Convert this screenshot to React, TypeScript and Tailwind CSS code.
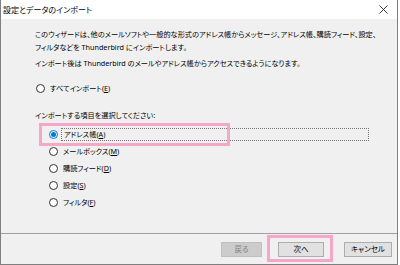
import React from 'react';

const jp = "font-['Noto_Sans','Noto_Sans_CJK_JP',sans-serif] [font-feature-settings:'palt']";

const Radio = ({ checked = false }: { checked?: boolean }) => (
  <span
    className={`inline-flex h-[9px] w-[9px] shrink-0 items-center justify-center rounded-full border bg-white ${
      checked ? 'border-[#0078d7]' : 'border-[#333333]'
    }`}
  >
    {checked && <span className="h-[5px] w-[5px] rounded-full bg-[#0078d7]" />}
  </span>
);

const Key = ({ k }: { k: string }) => (
  <>
    (<span className="underline underline-offset-1">{k}</span>)
  </>
);

const items = [
  { label: 'アドレス帳', key: 'A', checked: true },
  { label: 'メールボックス', key: 'M' },
  { label: '購読フィード', key: 'D' },
  { label: '設定', key: 'S' },
  { label: 'フィルタ', key: 'F' },
];

export default function App() {
  return (
    <div className={`relative h-[265px] w-[400px] overflow-hidden bg-white text-black ${jp}`}>
      <div className="flex h-[265px] w-[398px] flex-col border-x border-b border-[#7f7f7f]">
        {/* Title bar */}
        <div className="flex h-[19px] items-center justify-between bg-white pl-[2px] pr-[8px] text-[8px]">
          <span>設定とデータのインポート</span>
          <svg width="9" height="9" viewBox="0 0 9 9" className="mr-[1px]">
            <path d="M0.5 0.5 L8.5 8.5 M8.5 0.5 L0.5 8.5" stroke="#222" strokeWidth="0.9" />
          </svg>
        </div>

        {/* Body */}
        <div className="flex flex-1 flex-col whitespace-nowrap bg-[#f0f0f0] pl-[34px] pt-[9px] text-[7.2px] leading-[13px]">
          <p>このウィザードは、他のメールソフトや一般的な形式のアドレス帳からメッセージ、アドレス帳、購読フィード、設定、</p>
          <p>フィルタなどを Thunderbird にインポートします。</p>
          <p className="mt-[3px]">インポート後は Thunderbird のメールやアドレス帳からアクセスできるようになります。</p>

          <div className="mt-[12px] flex h-[13px] items-center gap-[5px] pl-[1px]">
            <Radio />
            <span>
              すべてインポート<Key k="E" />
            </span>
          </div>

          <p className="mt-[14px]">インポートする項目を選択してください:</p>

          <div className="mt-[6px] flex flex-col gap-[4px] pl-[14px]">
            {items.map((it) => (
              <div key={it.key} className="flex h-[13px] items-center gap-[3px]">
                <Radio checked={it.checked} />
                <span
                  className={`flex h-[13px] items-center px-[2px] ${
                    it.checked ? 'w-[308px] border border-dotted border-[#777777]' : ''
                  }`}
                >
                  {it.label}
                  <Key k={it.key} />
                </span>
              </div>
            ))}
          </div>
        </div>

        {/* Button bar */}
        <div className="flex h-[31px] items-start justify-end border-t border-[#a0a0a0] bg-[#f0f0f0] pr-[5px] pt-[8px] text-[7.5px]">
          <button className="flex h-[15px] w-[41px] items-center justify-center border border-[#bfbfbf] bg-[#cccccc] text-[#838383]">
            戻る
          </button>
          <button className="ml-[16px] flex h-[15px] w-[46px] items-center justify-center border border-[#adadad] bg-[#e1e1e1]">
            次へ
          </button>
          <button className="ml-[20px] flex h-[15px] w-[48px] items-center justify-center border border-[#adadad] bg-[#e1e1e1]">
            キャンセル
          </button>
        </div>
      </div>

      {/* Pink annotation boxes */}
      <div className="pointer-events-none absolute left-[39px] top-[123px] h-[23px] w-[191px] border-[3px] border-[#f4a7c7]" />
      <div className="pointer-events-none absolute left-[267px] top-[235px] h-[27px] w-[66px] border-[3px] border-[#f4a7c7]" />
    </div>
  );
}
